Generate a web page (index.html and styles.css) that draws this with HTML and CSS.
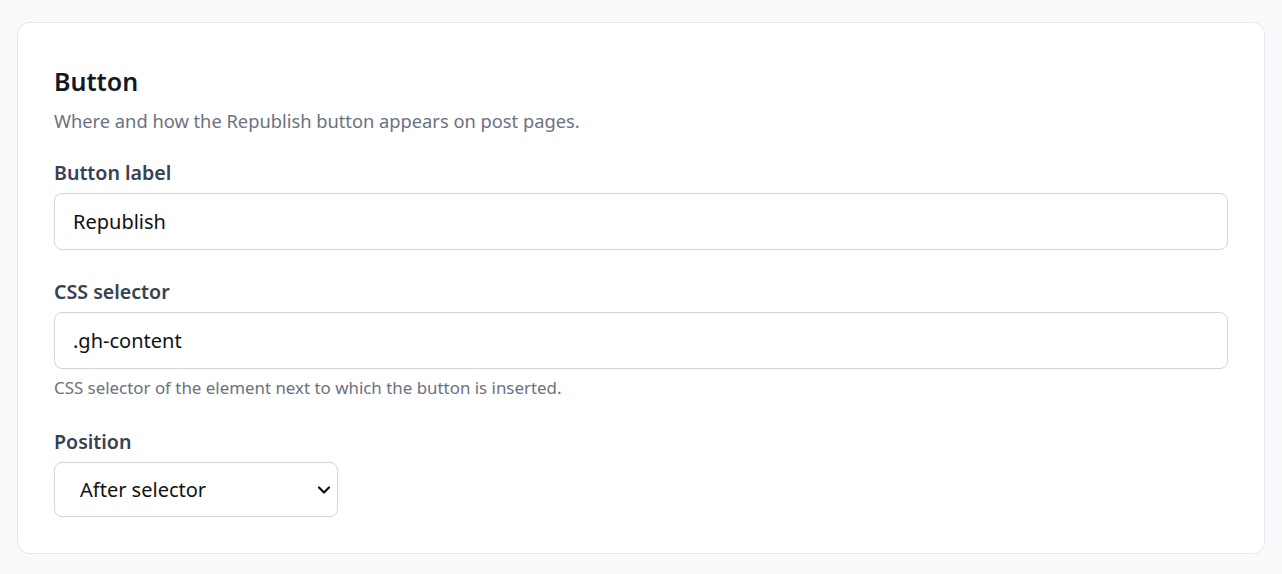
FILE: index.html
```html
<!DOCTYPE html>
<html lang="en">
<head>
  <meta charset="UTF-8">
  <title>Button settings</title>
  <link rel="stylesheet" href="styles.css">
</head>
<body>

<div class="page">
  <!-- Button settings card -->
  <div class="card">
    <h2>Button</h2>
    <p class="desc">Where and how the Republish button appears on post pages.</p>

    <div class="field">
      <label for="buttonLabel">Button label</label>
      <input type="text" id="buttonLabel" value="Republish">
    </div>

    <div class="field">
      <label for="cssSelector">CSS selector</label>
      <input type="text" id="cssSelector" value=".gh-content">
      <p class="help">CSS selector of the element next to which the button is inserted.</p>
    </div>

    <div class="field">
      <label for="position">Position</label>
      <div class="select-wrap">
        <select id="position">
          <option value="after">After selector</option>
          <option value="before">Before selector</option>
        </select>
        <svg class="chevron" width="14" height="14" viewBox="0 0 14 14">
          <path d="M2 4.5 L7 9.5 L12 4.5" fill="none" stroke="#111" stroke-width="2.2" stroke-linecap="round" stroke-linejoin="round"/>
        </svg>
      </div>
    </div>
  </div>
</div>

</body>
</html>
```

FILE: styles.css
```css
* {
  box-sizing: border-box;
}
body {
  font-family: "Noto Sans", "Open Sans", sans-serif;
  margin: 0;
  padding: 0;
  background: #f9fafb;
}
.page {
  padding: 22px 17px 21px;
}
.card {
  background: white;
  border: 1px solid #e5e7eb;
  border-radius: 12px;
  padding: 42px 36px 36px;
}
.card h2 {
  font-size: 25px;
  line-height: 32px;
  font-weight: 600;
  color: #111827;
  margin: 0 0 10px;
}
.desc {
  font-size: 18.3px;
  line-height: 28px;
  color: #6b7280;
  margin: 0 0 24px;
}
.field + .field {
  margin-top: 28px;
}
.field label {
  display: block;
  font-size: 19.6px;
  line-height: 28px;
  font-weight: 600;
  color: #374151;
  margin-bottom: 6px;
}
.field input,
.field select {
  font-family: inherit;
  font-size: 20px;
  color: #111;
  background: white;
  border: 1px solid #d1d5db;
  border-radius: 8px;
}
.field input {
  width: 100%;
  height: 57px;
  padding: 0 18px;
}
.help {
  font-size: 16.9px;
  line-height: 24px;
  color: #6b7280;
  margin: 7px 0 0;
}
.select-wrap {
  position: relative;
  width: 284px;
}
.field select {
  width: 100%;
  height: 55px;
  padding: 0 40px 0 25px;
  appearance: none;
  -webkit-appearance: none;
}
.chevron {
  position: absolute;
  right: 7px;
  top: 21px;
  pointer-events: none;
}
```
